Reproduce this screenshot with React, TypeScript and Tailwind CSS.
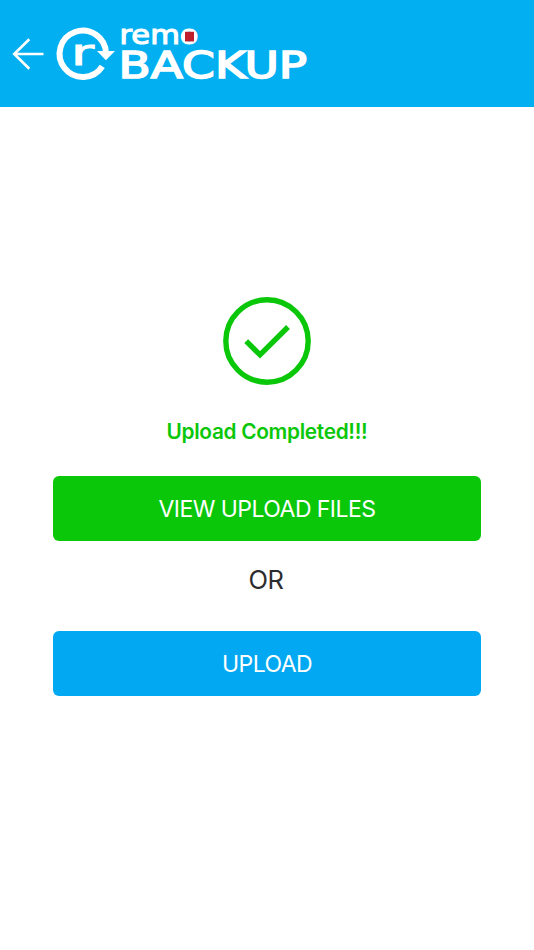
import React from "react";

const BackArrow = () => (
  <svg width="32" height="32" viewBox="0 0 32 32" fill="none" stroke="white" strokeWidth="2.6">
    <path d="M31.5 16H2M17.3 1.2L2.2 16l15.1 14.8" />
  </svg>
);

const Logo = () => (
  <svg width="252" height="60" viewBox="0 0 252 60" role="img" aria-label="remo BACKUP" className="overflow-visible font-['DejaVu_Sans',sans-serif]">
    <path d="M50 29.5A23.2 23.2 0 1 0 46.3 42.4" fill="none" stroke="white" strokeWidth="6" />
    <path d="M41 27h18L49.9 36.2z" fill="white" />
    <text x="15" y="40.5" fontSize="36" fill="white" stroke="white" strokeWidth="1" textLength="23" lengthAdjust="spacingAndGlyphs">r</text>
    <text x="63.5" y="20.4" fontSize="27" fill="white" stroke="white" strokeWidth="1.1" textLength="79" lengthAdjust="spacingAndGlyphs">remo</text>
    <rect x="129" y="7.8" width="9" height="9.6" fill="#bd1f2d" />
    <text x="62.6" y="54" fontSize="37" fill="white" stroke="white" strokeWidth="1.6" textLength="188.5" lengthAdjust="spacingAndGlyphs">BACKUP</text>
  </svg>
);

const CheckCircle = () => (
  <svg width="88" height="88" viewBox="0 0 88 88" fill="none" stroke="#0ac70a" strokeWidth="5.4">
    <circle cx="44" cy="44" r="41.2" />
    <path d="M23.2 44.1L37 57.8l28-27.8" />
  </svg>
);

const App = () => {
  return (
    <div className="flex h-[950px] w-[534px] flex-col bg-white font-['Inter',sans-serif]">
      <header className="flex h-[107px] items-center bg-[#02aff0] pl-3">
        <button className="mr-3" aria-label="Back">
          <BackArrow />
        </button>
        <Logo />
      </header>

      <main className="flex flex-col items-center px-[53px] pt-[189.6px]">
        <CheckCircle />
        <p className="mt-[31px] text-[20.8px] leading-8 font-semibold tracking-[-0.3px] text-[#0ac70a]">
          Upload Completed!!!
        </p>
        <button className="mt-[28px] h-[65px] w-full rounded-md bg-[#0ac70a] pt-0.5 text-[23px] tracking-[-0.55px] text-white">
          VIEW UPLOAD FILES
        </button>
        <p className="mt-[19px] mb-[31px] pr-0.5 text-[25.5px] leading-10 tracking-[-0.4px] text-[#2c2c2e]">OR</p>
        <button className="h-[65px] w-full rounded-md bg-[#02a9f2] pt-0.5 text-[23px] tracking-[-0.55px] text-white">
          UPLOAD
        </button>
      </main>
    </div>
  );
};

export default App;
